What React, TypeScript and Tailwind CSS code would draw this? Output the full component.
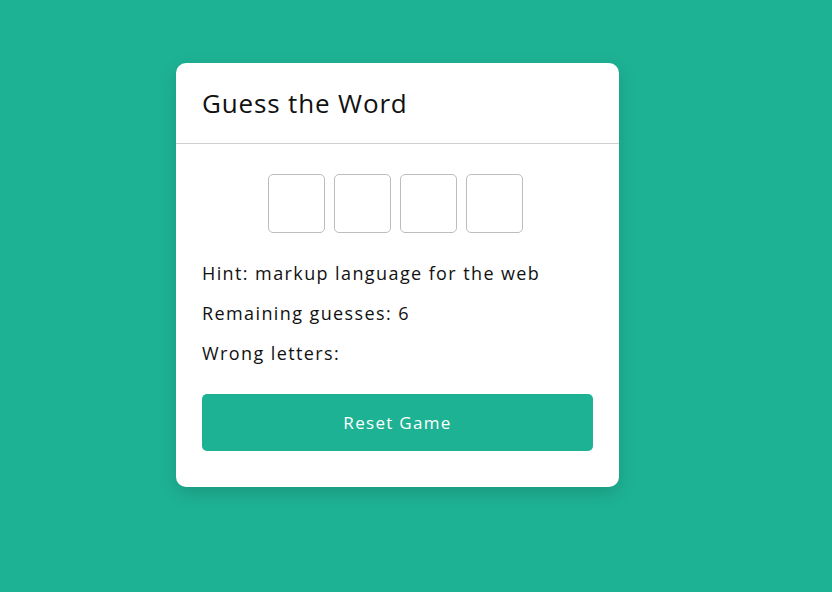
import React, { useState } from 'react';

const WORD = 'HTML';

export default function App() {
  const [guessed] = useState<string[]>([]);
  const [wrong] = useState<string[]>([]);

  return (
    <div className="min-h-screen w-full bg-[#1eb294] font-['Open_Sans',sans-serif] text-[#111]">
      <div className="flex justify-start pl-[176px] pt-[63px]">
        <div className="w-[443px] rounded-[10px] bg-white shadow-[0_6px_18px_rgba(0,0,0,0.15)]">
          <div className="border-b border-[#cfcfcf] px-[26px] h-[81px] flex items-center">
            <h1 className="text-[26px] font-normal leading-none tracking-[0.85px]">Guess the Word</h1>
          </div>
          <div className="px-[26px] pt-[30px] pb-[36px]">
            <div className="flex justify-center gap-[9px] pr-[4px]">
              {WORD.split('').map((ch, i) => (
                <div
                  key={i}
                  className="w-[57px] h-[59px] rounded-[5px] border border-[#bdbdbd] flex items-center justify-center text-2xl"
                >
                  {guessed.includes(ch) ? ch : ''}
                </div>
              ))}
            </div>
            <div className="mt-[27px] flex flex-col gap-[14px] text-[18px] leading-[26px] tracking-[1.4px]">
              <p>Hint: markup language for the web</p>
              <p>Remaining guesses: 6</p>
              <p>Wrong letters: {wrong.join(', ')}</p>
            </div>
            <button className="mt-[28px] w-full h-[57px] rounded-[5px] bg-[#1eb294] text-white text-[17px] tracking-[1.3px]">
              Reset Game
            </button>
          </div>
        </div>
      </div>
    </div>
  );
}
